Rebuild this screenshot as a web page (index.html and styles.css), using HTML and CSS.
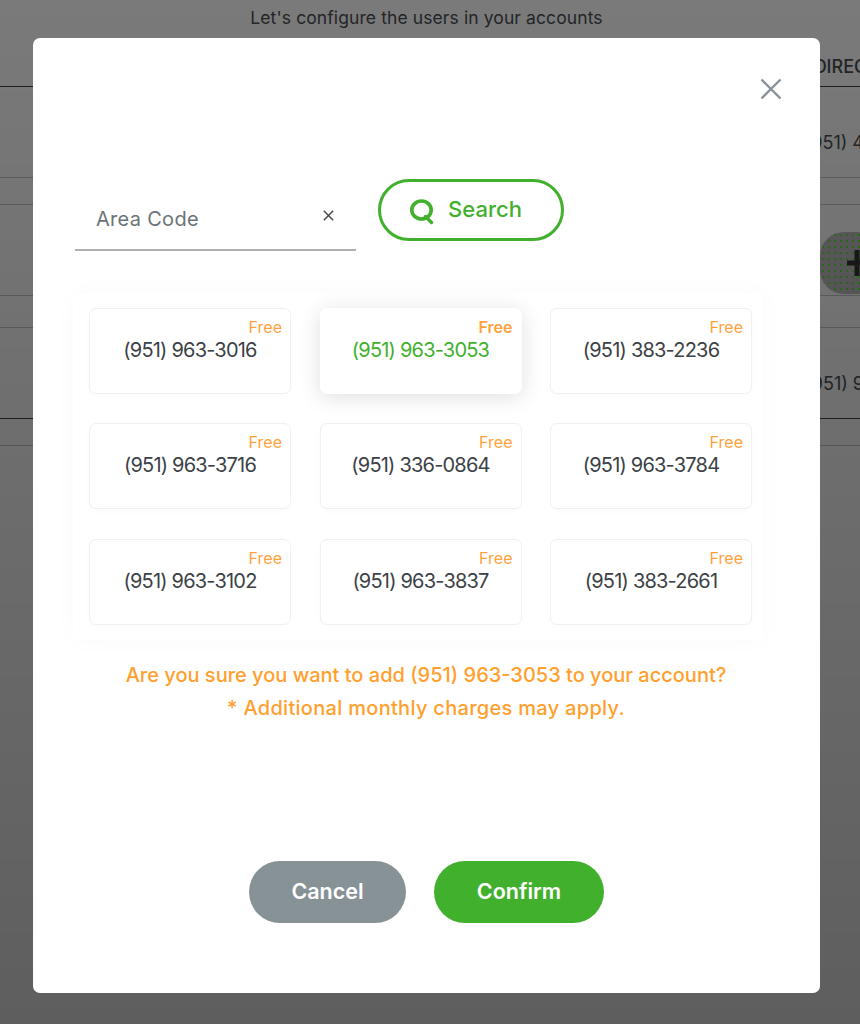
FILE: index.html
```html
<!doctype html>
<html><head><meta charset="UTF-8"><title>Add number</title><link rel="stylesheet" href="styles.css"></head>
<body>
  <div class="page">
    <div class="intro">Let's configure the users in your accounts</div>
    <div class="thead"><span>DIRECT</span></div>
    <div class="trow r1"><span class="num">(951) 4</span></div>
    <div class="trow r2"></div>
    <div class="trow r3"><span class="addbtn"><svg width="16" height="26" viewBox="0 0 16 26"><path d="M0 13h16M10 0v26" stroke="#333" stroke-width="5" fill="none"/></svg></span></div>
    <div class="trow r4"></div>
    <div class="trow r5"><span class="num">(951) 9</span></div>
    <div class="trow r6"></div>
  </div>

  <div class="overlay">
    <div class="modal">
      <button class="close" aria-label="Close"><svg width="22" height="22" viewBox="0 0 22 22"><path d="M1.500 1.500l19 19M20.500 1.500l-19 19" stroke="#87929a" stroke-width="2.400" fill="none"/></svg></button>

      <div class="searchbar">
        <div class="areafield">
          <span class="areafield-label">Area Code</span>
          <svg class="clear" width="11" height="11" viewBox="0 0 11 11"><path d="M.8.8l9.400 9.400M10.200.8L.8 10.200" stroke="#444" stroke-width="1.400" fill="none"/></svg>
        </div>
        <button class="searchbtn">
          <svg width="24" height="26" viewBox="0 0 24 26"><ellipse cx="11.500" cy="11" rx="9.700" ry="9" stroke="#41b02c" stroke-width="3.600" fill="none"/><path d="M15.500 17.500l6 6" stroke="#41b02c" stroke-width="3.400" stroke-linecap="round" fill="none"/></svg>
          <span>Search</span>
        </button>
      </div>

      <div class="numbers">
        <div class="card"><span class="free">Free</span><span class="phone">(951) 963-3016</span></div>
        <div class="card selected"><span class="free">Free</span><span class="phone">(951) 963-3053</span></div>
        <div class="card"><span class="free">Free</span><span class="phone">(951) 383-2236</span></div>
        <div class="card"><span class="free">Free</span><span class="phone">(951) 963-3716</span></div>
        <div class="card"><span class="free">Free</span><span class="phone">(951) 336-0864</span></div>
        <div class="card"><span class="free">Free</span><span class="phone">(951) 963-3784</span></div>
        <div class="card"><span class="free">Free</span><span class="phone">(951) 963-3102</span></div>
        <div class="card"><span class="free">Free</span><span class="phone">(951) 963-3837</span></div>
        <div class="card"><span class="free">Free</span><span class="phone">(951) 383-2661</span></div>
      </div>

      <div class="notice">
        <div>Are you sure you want to add (951) 963-3053 to your account?</div>
        <div class="notice-sub">* Additional monthly charges may apply.</div>
      </div>

      <div class="actions">
        <button class="btn cancel">Cancel</button>
        <button class="btn confirm">Confirm</button>
      </div>
    </div>
  </div>
</body></html>
```

FILE: styles.css
```css
* {box-sizing: border-box;}
html,body {margin:0;height:100%;}
body {font-family:"Inter","Open Sans",sans-serif;background:#fff;color:#4a4f54;overflow:hidden;}
button {font-family:inherit;cursor:pointer;}

/* page behind the dialog */
.page {height:1024px;overflow:hidden;}
.intro {text-align:center;font-size:17.500px;height:35px;padding:7px 7px 0 0;letter-spacing:.1px;}
.thead {height:52px;border-bottom:1px solid #3c4146;display:flex;justify-content:flex-end;align-items:center;font-size:18px;font-weight:500;padding-top:11px;white-space:nowrap;}
.thead span {margin-right:-19px;}
.trow {border-bottom:1px solid #c4c8cb;display:flex;justify-content:flex-end;align-items:center;font-size:18px;white-space:nowrap;overflow:hidden;}
.r1 {height:91px;}
.r2 {height:27px;}
.r3 {height:91px;}
.r4 {height:32px;}
.r5 {height:91px;border-bottom-color:#3c4146;}
.r6 {height:27px;}
.num {margin-right:-4px;}
.r1 .num {margin-top:21px;}
.r5 .num {margin-top:20px;}
.addbtn {width:60px;height:62px;margin-top:26px;border-radius:24px;background-color:#bfbfbf;background-image:radial-gradient(#5fe23f 1px,transparent 1.200px);background-size:6px 6px;display:flex;align-items:center;justify-content:flex-end;margin-right:-20px;padding:0 16px 0 0;}
.addbtn svg {margin-right:1px;}

.overlay {position:fixed;inset:0;background:linear-gradient(rgba(0,0,0,.52),rgba(0,0,0,.63));}
.modal {position:absolute;left:33px;top:38px;width:787px;height:955px;background:#fff;border-radius:7px;padding:141px 42px 0;}
.close {position:absolute;left:727px;top:40px;width:22px;height:22px;padding:0;border:0;background:none;display:flex;}

.searchbar {display:flex;gap:22px;align-items:flex-start;}
.areafield {width:281px;height:72px;border-bottom:2px solid #aeb0b1;padding:28px 0 0 21px;display:flex;justify-content:space-between;font-size:20px;letter-spacing:.3px;color:#6b7378;}
.clear {margin:3px 22px 0 0;}
.searchbtn {width:186px;height:62px;border:3px solid #41b02c;border-radius:31px;background:#fff;color:#41b02c;font-size:22px;font-weight:500;display:flex;align-items:center;justify-content:center;gap:14px;padding:0 10px 2px 0;}
.searchbtn svg {margin-top:5px;}

.numbers {margin:42px 13px 0 -2px;padding:15px 16px;display:grid;grid-template-columns:202px 202px 202px;grid-auto-rows:86px;column-gap:28.500px;row-gap:29.250px;box-shadow:0 0 24px rgba(0,0,0,.025);width:690px;}
.card {background:#fff;border:1px solid #f0f0f0;border-radius:7px;padding:9px 8px 0;display:flex;flex-direction:column;box-shadow:0 2px 8px rgba(0,0,0,.02);}
.free {align-self:flex-end;font-size:16px;line-height:19px;color:#ffa23c;}
.phone {text-align:center;font-size:20px;line-height:26px;letter-spacing:-.8px;color:#3c4146;}
.selected {border-color:#fff;box-shadow:0 3px 22px rgba(0,0,0,.13);}
.selected .free {font-weight:600;}
.selected .phone {color:#41b02c;}

.notice {margin-top:19.500px;text-align:center;font-size:20px;font-weight:500;line-height:33px;color:#ffa02e;padding-right:1px;}
.notice-sub {letter-spacing:.3px;}

.actions {margin-top:136px;display:flex;justify-content:center;gap:28px;}
.btn {height:62px;border:0;border-radius:31px;color:#fff;font-size:21.500px;font-weight:600;padding:0 0 2px;}
.cancel {width:157px;background:#879297;}
.confirm {width:170px;background:#41b02c;}
```
